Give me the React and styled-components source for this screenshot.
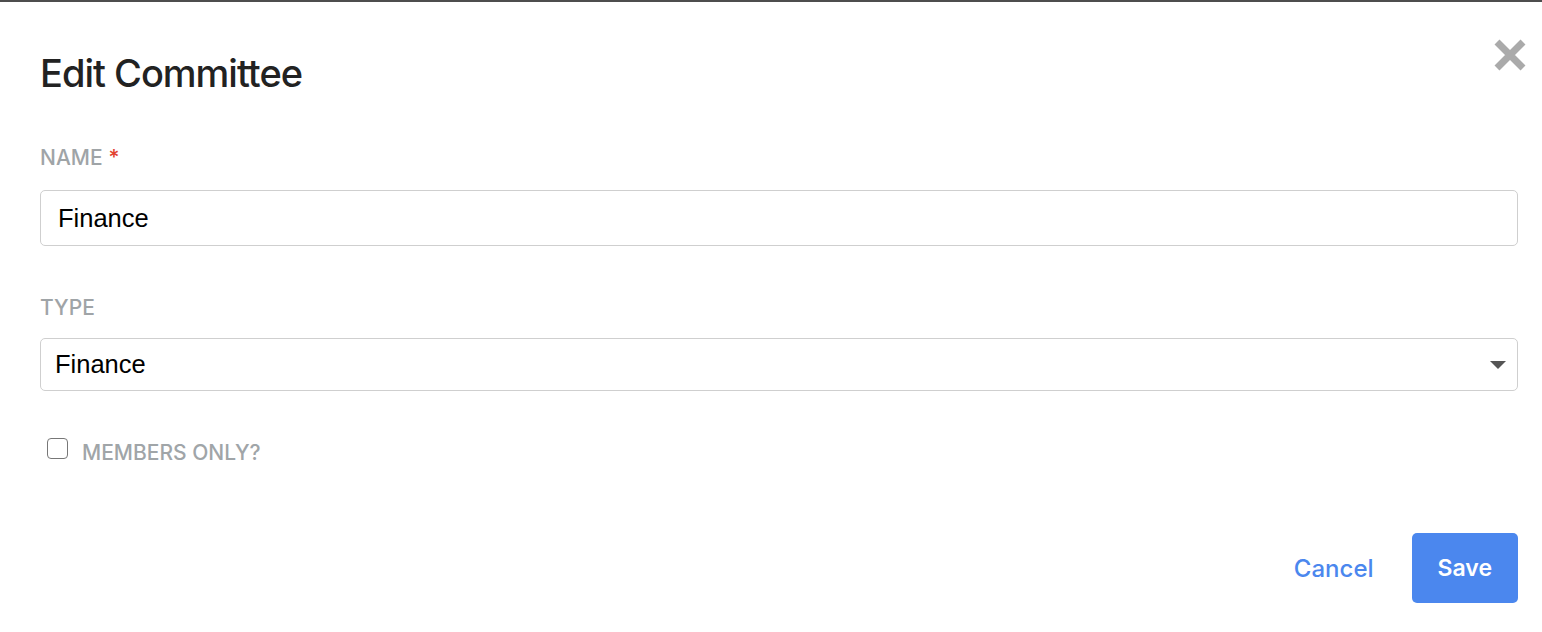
import React from 'react';
import styled, { createGlobalStyle } from 'styled-components';

const GlobalStyle = createGlobalStyle`
  html, body {
    margin: 0;
    padding: 0;
    background: #fff;
  }
  * {
    box-sizing: border-box;
  }
`;

const Page = styled.div`
  width: 1542px;
  height: 632px;
  border-top: 2px solid #4d4d4d;
  background: #fff;
  overflow: hidden;
`;

const Modal = styled.div`
  display: flex;
  flex-direction: column;
  padding: 37px 24px 0 40px;
`;

const Header = styled.div`
  display: flex;
  justify-content: space-between;
  align-items: flex-start;
`;

const Title = styled.h2`
  margin: 10px 0 0 0;
  font-family: Inter, "Liberation Sans", sans-serif;
  font-size: 38px;
  line-height: 48px;
  font-weight: 500;
  letter-spacing: -1px;
  color: #222;
`;

const CloseButton = styled.button`
  width: 34px;
  height: 34px;
  margin-right: -9px;
  margin-top: -1px;
  padding: 0;
  border: none;
  background: none;
  cursor: pointer;
  display: flex;
`;

const Field = styled.div`
  display: flex;
  flex-direction: column;
  margin-top: ${p => p.top}px;
`;

const Label = styled.label`
  font-family: Inter, "Liberation Sans", sans-serif;
  font-size: 21px;
  line-height: 24px;
  font-weight: 500;
  color: #9fa4a7;
  margin-bottom: ${p => p.gap}px;
`;

const Required = styled.span`
  color: #e2412f;
  margin-left: 6px;
`;

const TextInput = styled.input`
  width: 100%;
  height: 56px;
  padding: 0 17px;
  border: 1px solid #cfcfcf;
  border-radius: 5px;
  font-family: "Liberation Sans", Arial, sans-serif;
  font-size: 25.5px;
  color: #000;
  outline: none;
`;

const SelectBox = styled.div`
  width: 100%;
  height: 53px;
  padding: 0 11px 0 14px;
  border: 1px solid #cfcfcf;
  border-radius: 5px;
  display: flex;
  align-items: center;
  justify-content: space-between;
  font-family: "Liberation Sans", Arial, sans-serif;
  font-size: 25.5px;
  color: #000;
  cursor: pointer;
`;

const CheckRow = styled.label`
  display: flex;
  align-items: flex-start;
  gap: 14px;
  margin-top: 47px;
  padding-left: 7px;
  cursor: pointer;
`;

const CheckBox = styled.span`
  width: 21px;
  height: 21px;
  border: 1.5px solid #777;
  border-radius: 4px;
  background: #fff;
  flex: none;
`;

const CheckText = styled.span`
  font-family: Inter, "Liberation Sans", sans-serif;
  font-size: 21px;
  line-height: 24px;
  margin-top: 3px;
  font-weight: 500;
  color: #a0a5a8;
`;

const Footer = styled.div`
  display: flex;
  justify-content: flex-end;
  align-items: center;
  gap: 38px;
  margin-top: 68px;
`;

const Button = styled.button`
  height: 70px;
  padding: 0 ${p => (p.primary ? 26 : 0)}px;
  border: none;
  border-radius: 5px;
  background: ${p => (p.primary ? '#4b87ee' : 'transparent')};
  color: ${p => (p.primary ? '#fff' : '#4b87ee')};
  font-family: Inter, "Liberation Sans", sans-serif;
  font-size: ${p => (p.primary ? 23 : 24)}px;
  font-weight: ${p => (p.primary ? 600 : 500)};
  cursor: pointer;
`;

const App = () => {
  return (
    <>
      <GlobalStyle />
      <Page>
        <Modal>
          <Header>
            <Title>Edit Committee</Title>
            <CloseButton aria-label="Close">
              <svg width="34" height="34" viewBox="0 0 34 34">
                <path d="M4 4 L30 30 M30 4 L4 30" stroke="#aaaaaa" strokeWidth="7" />
              </svg>
            </CloseButton>
          </Header>

          <Field top={49}>
            <Label gap={20}>
              NAME<Required>*</Required>
            </Label>
            <TextInput defaultValue="Finance" />
          </Field>

          <Field top={50}>
            <Label gap={18}>TYPE</Label>
            <SelectBox>
              <span>Finance</span>
              <svg width="16" height="8" viewBox="0 0 16 8">
                <path d="M0 0 L16 0 L8 8 Z" fill="#555" />
              </svg>
            </SelectBox>
          </Field>

          <CheckRow>
            <CheckBox />
            <CheckText>MEMBERS ONLY?</CheckText>
          </CheckRow>

          <Footer>
            <Button>Cancel</Button>
            <Button primary>Save</Button>
          </Footer>
        </Modal>
      </Page>
    </>
  );
};

export default App;
